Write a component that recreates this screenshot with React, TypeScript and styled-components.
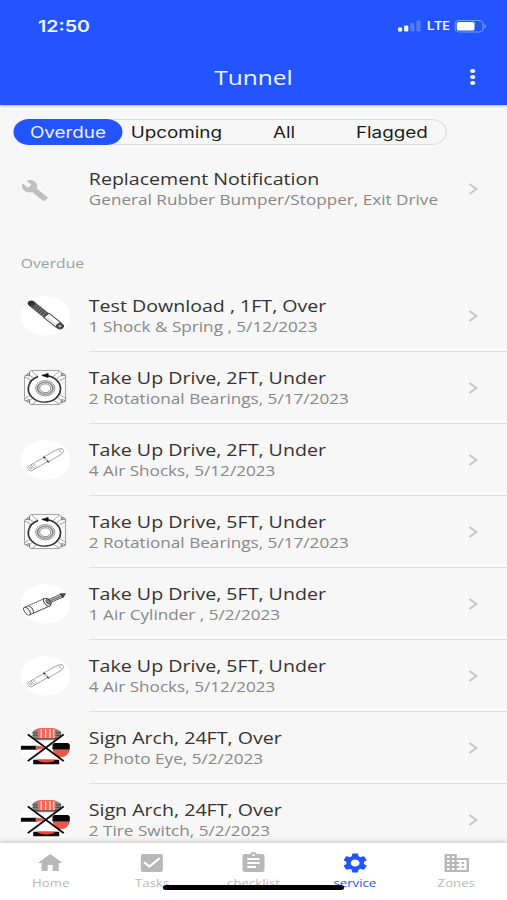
import React from "react";
import styled, { createGlobalStyle } from "styled-components";
import { MdHome, MdCheckBox, MdAssignment, MdSettings, MdBusiness, MdBuild } from "react-icons/md";

const GlobalStyle = createGlobalStyle`
  * { box-sizing: border-box; }
  html, body { margin: 0; background: #f7f7f7; overflow: hidden; }
`;

const Screen = styled.div`
  width: 414px;
  height: 900px;
  display: flex;
  flex-direction: column;
  overflow: hidden;
  background: #f7f7f7;
  font-family: "Open Sans", sans-serif;
  color: #333;
  transform: scaleX(1.22464);
  transform-origin: 0 0;
`;

const Header = styled.header`
  height: 105px;
  flex: none;
  background: #2255ff;
  color: #f0f4ff;
  box-shadow: 0 1px 2px rgba(0, 0, 0, 0.3);
`;

const StatusBar = styled.div`
  height: 51px;
  padding: 1px 16px 0 31px;
  display: flex;
  align-items: center;
  justify-content: space-between;
`;

const Clock = styled.span`
  font: 600 16px/20px Inter, sans-serif;
`;

const StatusIcons = styled.div`
  display: flex;
  align-items: center;
  font: 600 12px/16px "Open Sans", sans-serif;
  letter-spacing: -0.4px;
  gap: 4px;
  svg { display: block; }
`;

const TitleBar = styled.div`
  height: 54px;
  display: grid;
  grid-template-columns: 56px 1fr 56px;
  align-items: center;
`;

const Title = styled.h1`
  grid-column: 2;
  margin: 0;
  text-align: center;
  font-size: 20px;
  line-height: 28px;
  font-weight: 500;
`;

const MoreButton = styled.button`
  border: 0;
  padding: 0 0 2px;
  background: none;
  display: flex;
  justify-content: center;
`;

const Segment = styled.div`
  width: 354px;
  height: 26px;
  flex: none;
  margin: 14px 0 0 11px;
  display: grid;
  grid-template-columns: repeat(4, 1fr);
  border: 1px solid #dedede;
  border-radius: 13px;
`;

const SegmentButton = styled.button<{ $active?: boolean }>`
  height: 26px;
  border: 0;
  margin: -1px 0 -1px ${(p) => (p.$active ? "-1px" : "0")};
  padding: 1px 0 0;
  border-radius: 13px;
  background: ${(p) => (p.$active ? "#2255ff" : "transparent")};
  color: ${(p) => (p.$active ? "#eef2ff" : "#1c1c1c")};
  font: 400 15.4px/25px Inter, sans-serif;
`;

const List = styled.main`
  flex: 1;
  min-height: 0;
  overflow: hidden;
`;

const Row = styled.div`
  height: 72px;
  padding-left: 16.5px;
  display: flex;
  align-items: center;
`;

const NoticeRow = styled(Row)`
  margin-top: 9px;
`;

const Avatar = styled.div`
  width: 41px;
  height: 40px;
  margin-right: 15px;
  flex: none;
  display: flex;
  align-items: center;
  svg { display: block; }
`;

const RowBody = styled.div<{ $line?: boolean }>`
  flex: 1;
  height: 72px;
  padding-right: 21px;
  display: flex;
  align-items: center;
  justify-content: space-between;
  border-bottom: ${(p) => (p.$line ? "1px solid #dfdfdf" : "2px solid transparent")};
`;

const RowTitle = styled.div`
  font-size: 16px;
  line-height: 22px;
  white-space: nowrap;
`;

const RowNote = styled.div`
  font-size: 14px;
  line-height: 20px;
  color: #888;
  white-space: nowrap;
`;

const SectionLabel = styled.h2`
  margin: 0;
  height: 54px;
  padding: 28px 0 0 17px;
  font-size: 12.8px;
  line-height: 18px;
  font-weight: 400;
  color: #9b9fa1;
`;

const TabBar = styled.nav`
  height: 57px;
  flex: none;
  display: grid;
  grid-template-columns: repeat(5, 1fr);
  background: #fff;
  box-shadow: 0 -1px 5px rgba(0, 0, 0, 0.22);
  position: relative;
`;

const Tab = styled.div<{ $active?: boolean }>`
  padding-top: 8px;
  display: flex;
  flex-direction: column;
  align-items: center;
  color: ${(p) => (p.$active ? "#2255ff" : "#b8b8b8")};
  svg { display: block; }
`;

const TabLabel = styled.span`
  margin-top: 1px;
  font-size: 10.8px;
  line-height: 14px;
`;

const HomeIndicator = styled.div`
  position: absolute;
  left: 133px;
  bottom: 10px;
  width: 148px;
  height: 5px;
  border-radius: 3px;
  background: #000;
`;

const Signal = () => (
  <svg width="19" height="12" viewBox="0 0 19 12" fill="#fff">
    <rect x="0" y="7.5" width="3.4" height="4" rx="1" />
    <rect x="5" y="5.5" width="3.4" height="6" rx="1" />
    <rect x="10" y="3" width="3.4" height="8.5" rx="1" opacity=".22" />
    <rect x="15" y=".5" width="3.4" height="11" rx="1" opacity=".22" />
  </svg>
);

const Battery = () => (
  <svg width="27" height="13" viewBox="0 0 27 13" fill="#fff">
    <rect x=".5" y=".5" width="23" height="11.5" rx="3.4" fill="none" stroke="#fff" opacity=".4" />
    <rect x="2" y="2" width="14.5" height="8.5" rx="1.6" />
    <path d="M24.8 4.2v4c1.2-.4 1.2-3.6 0-4z" opacity=".5" />
  </svg>
);

const Dots = () => (
  <svg width="6" height="18" viewBox="0 0 6 18" fill="#fff">
    <circle cx="3" cy="3" r="2.1" />
    <circle cx="3" cy="9" r="2.1" />
    <circle cx="3" cy="15" r="2.1" />
  </svg>
);

const Chevron = () => (
  <svg width="13" height="14" viewBox="0 0 13 14" fill="none" stroke="#c6c6c6" strokeWidth="1.7">
    <path d="M3.3 1.8 9.1 7l-5.800 5.200" />
  </svg>
);

const ShockArt = () => (
  <>
    <circle cx="20" cy="20" r="20" fill="#fff" />
    <g transform="translate(7.500 6.500) rotate(45)">
      <rect x="0" y="-3" width="19" height="6" rx="2" fill="#505050" />
      <path d="M3-3l1 6M5.500-3l1 6M8-3l1 6M10.500-3l1 6M13-3l1 6M15.500-3l1 6" stroke="#999" strokeWidth=".6" />
      <rect x="18.500" y="-3" width="14" height="6" fill="#fff" stroke="#444" strokeWidth=".9" />
      <path d="M20 1.200h11" stroke="#aaa" strokeWidth=".6" />
      <circle cx="1.300" cy="0" r="2.800" fill="#333" />
      <circle cx="34" cy="0" r="3.200" fill="#444" />
      <circle cx="34" cy="0" r="1.200" fill="#bbb" />
    </g>
  </>
);

const BearingArt = () => (
  <g fill="none" stroke="#8a8a8a" strokeWidth=".7">
    <path d="M8 2.500h23l2 3 3 1.500v27l-4 .500-1 2.500H8l-1.500-3L3 33V8l3-1.500z" fill="#fafafa" />
    <path d="M5 5l7 7M9 3l5 6M3 9l6 4M35 5l-7 7M31 3l-5 6M37 9l-6 4M5 35l7-7M9 37l5-5M3 31l6-4M35 35l-7-7M31 37l-5-5M37 31l-6-4" />
    <path d="M4 7l3 1 0-4M36 7l-3 1V4M4 33l3-1v4M36 33l-3-1v4" stroke="#666" />
    <circle cx="19.700" cy="20.500" r="13" fill="#fff" stroke="none" />
    <path d="M21.500 7.800A13 13.500 0 1 1 14 8.600" stroke="#333" strokeWidth="1.400" />
    <path d="M17 7.500l5-2v4z" fill="#111" stroke="#111" />
    <circle cx="19.700" cy="20.500" r="7.800" stroke="#777" />
    <circle cx="19.700" cy="20.500" r="6.200" stroke="#888" strokeWidth="1.500" />
    <circle cx="19.700" cy="20.500" r="4.500" stroke="#666" />
  </g>
);

const AirShockArt = () => (
  <>
    <circle cx="20" cy="20" r="20" fill="#fff" />
    <g transform="translate(6.500 29.500) rotate(-35.500)" fill="#fff" stroke="#999" strokeWidth=".7">
      <path d="M1-2.600h15.500v5.200H1C-1 1.500-1-1.500 1-2.600z" />
      <path d="M17.500-3H30c3 .600 4 1.600 4 3s-1 2.400-4 3H17.500z" />
      <path d="M4-2.500v5M6-2.500v5M31-2.400v4.800" />
      <path d="M17-3.500v1.800M17 1.700v2" stroke="#333" strokeWidth="1.300" />
      <circle cx="2" cy="0" r="1" />
    </g>
  </>
);

const CylinderArt = () => (
  <>
    <circle cx="20" cy="20" r="20" fill="#fff" />
    <g transform="translate(5 27.500) rotate(-29)" fill="#fff" stroke="#555" strokeWidth=".8">
      <path d="M0-4.300h18v8.600H0z" />
      <ellipse cx="0" cy="0" rx="2" ry="4.300" />
      <path d="M3.500-4.300c2 2 2 6.500 0 8.600" />
      <ellipse cx="18.500" cy="0" rx="2.200" ry="4.500" stroke="#333" />
      <ellipse cx="20" cy="0" rx="1.800" ry="3" fill="#888" />
      <path d="M21-1.800h11v3.400H21z" fill="#ccc" stroke="#444" />
      <path d="M21 0h10" />
      <path d="M32-2.200l3.500 1.700-3.500 2.400z" fill="#555" stroke="#333" />
    </g>
  </>
);

const SignArchArt = () => (
  <>
    <circle cx="20" cy="20" r="20" fill="#fff" />
    <path d="M13 .8h15l4.500 2.700v6L28 12.500H13L9.500 9V3.500z" fill="#808080" />
    <path d="M9.500 5h23M9.500 7.500h23M12 10.500h18" stroke="#444" strokeWidth=".9" />
    <rect x="13.500" y="0" width="14.500" height="10.500" rx="2" fill="#f4685a" />
    <path d="M16.500 1v9M20 1v9M23.500 1v9M26.500 1v9" stroke="#ffdcd6" strokeWidth="1" />
    <rect x="0" y="18" width="13" height="4" fill="#090909" />
    <path d="M12 18.300h4l3 1.700-3 1.700h-4z" fill="#ed5546" />
    <path d="M26 21.500h13.200c0 4-2.500 8-7 8s-6.200-4-6.200-8z" fill="#ee5546" />
    <path d="M27 15.200h11l1.700 1.500v5H25.500v-5z" fill="#090909" />
    <path d="M10 32.200h21v4.500H10z" fill="#130707" />
    <path d="M13 32h15c-1.500 4-13.500 4-15 0z" fill="#e34b3d" />
    <path d="M5.600 6.500l29 27M34.600 6.500l-29 27" stroke="#111" strokeWidth="1.700" />
  </>
);

const art = {
  shock: ShockArt,
  bearing: BearingArt,
  airShock: AirShockArt,
  cylinder: CylinderArt,
  sign: SignArchArt,
};

const rows: { art: keyof typeof art; title: string; note: string }[] = [
  { art: "shock", title: "Test Download , 1FT, Over", note: "1 Shock & Spring , 5/12/2023" },
  { art: "bearing", title: "Take Up Drive, 2FT, Under", note: "2 Rotational Bearings, 5/17/2023" },
  { art: "airShock", title: "Take Up Drive, 2FT, Under", note: "4 Air Shocks, 5/12/2023" },
  { art: "bearing", title: "Take Up Drive, 5FT, Under", note: "2 Rotational Bearings, 5/17/2023" },
  { art: "cylinder", title: "Take Up Drive, 5FT, Under", note: "1 Air Cylinder , 5/2/2023" },
  { art: "airShock", title: "Take Up Drive, 5FT, Under", note: "4 Air Shocks, 5/12/2023" },
  { art: "sign", title: "Sign Arch, 24FT, Over", note: "2 Photo Eye, 5/2/2023" },
  { art: "sign", title: "Sign Arch, 24FT, Over", note: "2 Tire Switch, 5/2/2023" },
];

const tabs = [
  { label: "Home", Icon: MdHome },
  { label: "Tasks", Icon: MdCheckBox },
  { label: "checklist", Icon: MdAssignment },
  { label: "service", Icon: MdSettings, active: true },
  { label: "Zones", Icon: MdBusiness },
];

export default function App() {
  return (
    <>
      <GlobalStyle />
      <Screen>
        <Header>
          <StatusBar>
            <Clock>12:50</Clock>
            <StatusIcons>
              <Signal />
              <span>LTE</span>
              <Battery />
            </StatusIcons>
          </StatusBar>
          <TitleBar>
            <Title>Tunnel</Title>
            <MoreButton aria-label="More">
              <Dots />
            </MoreButton>
          </TitleBar>
        </Header>
        <Segment>
          <SegmentButton $active>Overdue</SegmentButton>
          <SegmentButton>Upcoming</SegmentButton>
          <SegmentButton>All</SegmentButton>
          <SegmentButton>Flagged</SegmentButton>
        </Segment>
        <List>
          <NoticeRow>
            <Avatar>
              <MdBuild size={23} color="#c0c0c0" />
            </Avatar>
            <RowBody>
              <div>
                <RowTitle>Replacement Notification</RowTitle>
                <RowNote>General Rubber Bumper/Stopper, Exit Drive</RowNote>
              </div>
              <Chevron />
            </RowBody>
          </NoticeRow>
          <SectionLabel>Overdue</SectionLabel>
          {rows.map((row, i) => {
            const Art = art[row.art];
            return (
              <Row key={i}>
                <Avatar>
                  <svg width="40.500" height="39.500" viewBox="0 0 40 40" preserveAspectRatio="none">
                    <Art />
                  </svg>
                </Avatar>
                <RowBody $line>
                  <div>
                    <RowTitle>{row.title}</RowTitle>
                    <RowNote>{row.note}</RowNote>
                  </div>
                  <Chevron />
                </RowBody>
              </Row>
            );
          })}
        </List>
        <TabBar>
          {tabs.map(({ label, Icon, active }) => (
            <Tab key={label} $active={active}>
              <Icon size={24} />
              <TabLabel>{label}</TabLabel>
            </Tab>
          ))}
          <HomeIndicator />
        </TabBar>
      </Screen>
    </>
  );
}
